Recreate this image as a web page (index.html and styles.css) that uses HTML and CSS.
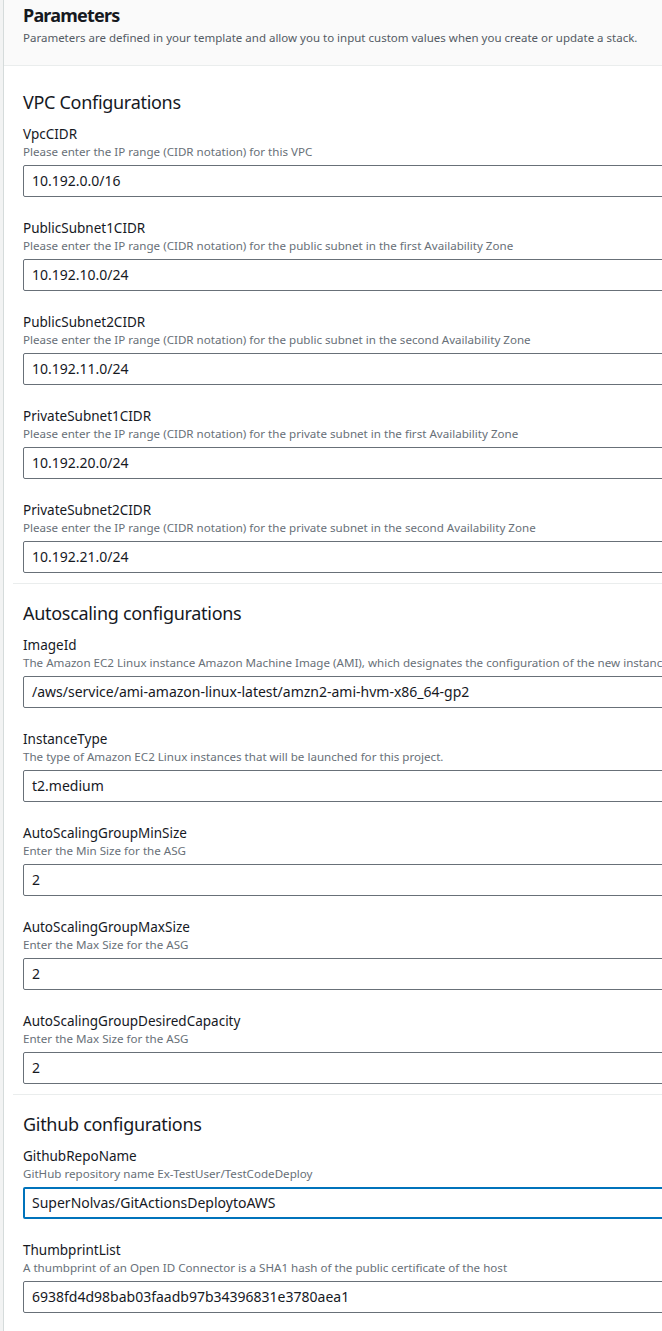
FILE: index.html
```html
<!DOCTYPE html>
<html>
<head>
<meta charset="utf-8">
<link rel="stylesheet" href="styles.css">
</head>
<body>
<div class="page">
  <header class="header">
    <h1 class="header-title">Parameters</h1>
    <p class="header-desc">Parameters are defined in your template and allow you to input custom values when you create or update a stack.</p>
  </header>

  <section class="section section-first">
    <h2 class="section-title">VPC Configurations</h2>
    <div class="field">
      <div class="label">VpcCIDR</div>
      <div class="desc">Please enter the IP range (CIDR notation) for this VPC</div>
      <div class="input">10.192.0.0/16</div>
    </div>
    <div class="field">
      <div class="label">PublicSubnet1CIDR</div>
      <div class="desc">Please enter the IP range (CIDR notation) for the public subnet in the first Availability Zone</div>
      <div class="input">10.192.10.0/24</div>
    </div>
    <div class="field">
      <div class="label">PublicSubnet2CIDR</div>
      <div class="desc">Please enter the IP range (CIDR notation) for the public subnet in the second Availability Zone</div>
      <div class="input">10.192.11.0/24</div>
    </div>
    <div class="field">
      <div class="label">PrivateSubnet1CIDR</div>
      <div class="desc">Please enter the IP range (CIDR notation) for the private subnet in the first Availability Zone</div>
      <div class="input">10.192.20.0/24</div>
    </div>
    <div class="field">
      <div class="label">PrivateSubnet2CIDR</div>
      <div class="desc">Please enter the IP range (CIDR notation) for the private subnet in the second Availability Zone</div>
      <div class="input">10.192.21.0/24</div>
    </div>
  </section>
  <hr class="divider">

  <section class="section">
    <h2 class="section-title">Autoscaling configurations</h2>
    <div class="field">
      <div class="label">ImageId</div>
      <div class="desc">The Amazon EC2 Linux instance Amazon Machine Image (AMI), which designates the configuration of the new instance.</div>
      <div class="input">/aws/service/ami-amazon-linux-latest/amzn2-ami-hvm-x86_64-gp2</div>
    </div>
    <div class="field">
      <div class="label">InstanceType</div>
      <div class="desc">The type of Amazon EC2 Linux instances that will be launched for this project.</div>
      <div class="input">t2.medium</div>
    </div>
    <div class="field">
      <div class="label">AutoScalingGroupMinSize</div>
      <div class="desc">Enter the Min Size for the ASG</div>
      <div class="input">2</div>
    </div>
    <div class="field">
      <div class="label">AutoScalingGroupMaxSize</div>
      <div class="desc">Enter the Max Size for the ASG</div>
      <div class="input">2</div>
    </div>
    <div class="field">
      <div class="label">AutoScalingGroupDesiredCapacity</div>
      <div class="desc">Enter the Max Size for the ASG</div>
      <div class="input">2</div>
    </div>
  </section>
  <hr class="divider">

  <section class="section">
    <h2 class="section-title">Github configurations</h2>
    <div class="field">
      <div class="label">GithubRepoName</div>
      <div class="desc">GitHub repository name Ex-TestUser/TestCodeDeploy</div>
      <div class="input input-focus">SuperNolvas/GitActionsDeploytoAWS</div>
    </div>
    <div class="field">
      <div class="label">ThumbprintList</div>
      <div class="desc">A thumbprint of an Open ID Connector is a SHA1 hash of the public certificate of the host</div>
      <div class="input">6938fd4d98bab03faadb97b34396831e3780aea1</div>
    </div>
  </section>
</div>
</body>
</html>
```

FILE: styles.css
```css
html, body {
  margin: 0;
  padding: 0;
  background: #ffffff;
  overflow: hidden;
}
body {
  font-family: "Noto Sans", "Open Sans", sans-serif;
  color: #16191f;
  width: 662px;
  height: 1331px;
  background: #f2f3f3;
}
.page {
  margin-left: 3px;
  width: 1000px;
  min-height: 1331px;
  background: #ffffff;
  border-left: 1px solid #d5dbdb;
}
.header {
  background: #fafafa;
  height: 66px;
  box-sizing: border-box;
  padding: 3px 19px 0;
  border-bottom: 1px solid #eaeded;
}
.header-title {
  margin: 0;
  font-size: 18px;
  line-height: 24px;
  font-weight: 700;
  letter-spacing: -0.8px;
}
.header-desc {
  margin: 3px 0 0;
  font-size: 11.5px;
  line-height: 16px;
  color: #545b64;
}
.section {
  padding: 17px 19px 10px;
}
.section-first {
  padding-top: 24px;
}
.section-title {
  margin: 0 0 10px;
  font-size: 18px;
  line-height: 24px;
  font-weight: 400;
  letter-spacing: -0.3px;
}
.field {
  margin-bottom: 21px;
}
.field:last-child {
  margin-bottom: 0;
}
.label {
  font-size: 13.5px;
  line-height: 20px;
}
.desc {
  font-size: 11.6px;
  line-height: 16px;
  color: #687078;
  white-space: nowrap;
  margin-bottom: 5px;
}
.input {
  height: 32px;
  box-sizing: border-box;
  border: 1px solid #687078;
  border-radius: 2px;
  padding: 0 8px;
  font-size: 14px;
  line-height: 30px;
  color: #16191f;
  white-space: nowrap;
}
.input-focus {
  border: 2px solid #0073bb;
  padding: 0 7px;
  line-height: 28px;
}
.divider {
  margin: 0 0 0 9px;
  border: 0;
  border-top: 1px solid #eaeded;
}
```
